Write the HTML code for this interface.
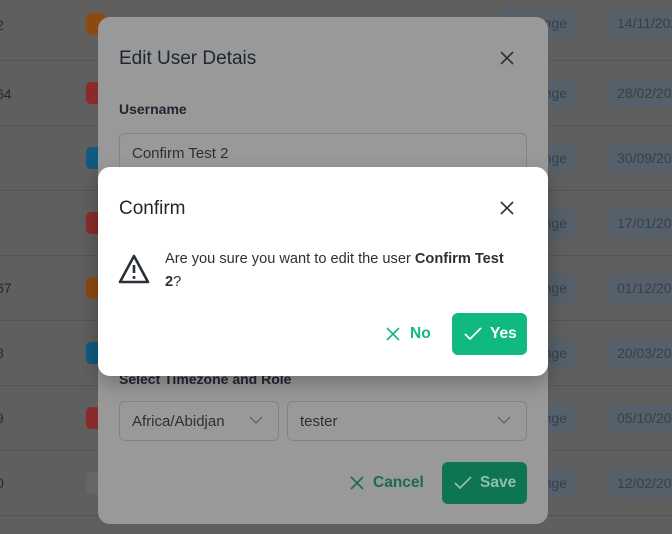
<!DOCTYPE html>
<html><head><style>
*{box-sizing:border-box;margin:0;padding:0}
body{width:672px;height:534px;overflow:hidden;background:#5f5f5f;font-family:"Liberation Sans",sans-serif;position:relative;color:#1f2937}
.row{position:absolute;left:0;width:672px;height:65px;border-bottom:1px solid #555}
.num{position:absolute;left:-4px;font-size:14px;color:#2a2a2a}
.b{position:absolute;left:86px;width:20px;height:22px;border-radius:5px}
.nge{position:absolute;left:500px;width:75px;height:29px;border-radius:6px;background:#56606a;color:#34404c;font-size:14px;text-align:right;padding:6px 8px 0 0}
.dt{position:absolute;left:608px;width:80px;height:29px;border-radius:6px;background:#56606a;color:#34404c;font-size:14px;padding:6px 0 0 9px}
.modal{position:absolute;left:98px;width:450px;border-radius:12px}
.x{position:absolute;width:14px;height:14px}
.inp{position:absolute;border:1px solid #808488;border-radius:6px;font-size:15px;color:#2c3036;padding:11px 12px}
</style></head><body>
<div class="row" style="top:-4px"><span class="num" style="top:21px">2</span><div class="b" style="top:17px;background:#8a4a10"></div><div class="nge" style="top:13px">nge</div><div class="dt" style="top:13px">14/11/2023</div></div>
<div class="row" style="top:61px"><span class="num" style="top:25px">64</span><div class="b" style="top:21px;background:#8a2a2a"></div><div class="nge" style="top:18px">nge</div><div class="dt" style="top:18px">28/02/2023</div></div>
<div class="row" style="top:126px"><div class="b" style="top:21px;background:#0e5a80"></div><div class="nge" style="top:18px">nge</div><div class="dt" style="top:18px">30/09/2023</div></div>
<div class="row" style="top:191px"><div class="b" style="top:21px;background:#8a2a2a"></div><div class="nge" style="top:18px">nge</div><div class="dt" style="top:18px">17/01/2023</div></div>
<div class="row" style="top:256px"><span class="num" style="top:24px">67</span><div class="b" style="top:21px;background:#8a4a10"></div><div class="nge" style="top:18px">nge</div><div class="dt" style="top:18px">01/12/2023</div></div>
<div class="row" style="top:321px"><span class="num" style="top:24px">8</span><div class="b" style="top:21px;background:#0e5a80"></div><div class="nge" style="top:18px">nge</div><div class="dt" style="top:18px">20/03/2023</div></div>
<div class="row" style="top:386px"><span class="num" style="top:24px">9</span><div class="b" style="top:21px;background:#8a2a2a"></div><div class="nge" style="top:18px">nge</div><div class="dt" style="top:18px">05/10/2023</div></div>
<div class="row" style="top:451px"><span class="num" style="top:24px">0</span><div class="b" style="top:21px;background:#666"></div><div class="nge" style="top:18px">nge</div><div class="dt" style="top:18px">12/02/2023</div></div>

<div class="modal" style="top:17px;height:507px;background:#999">
  <div style="position:absolute;left:21px;top:31px;font-size:19px;color:#1e2630">Edit User Detais</div>
  <svg class="x" style="left:402px;top:34px" viewBox="0 0 14 14"><path d="M1 1L13 13M13 1L1 13" stroke="#2a3038" stroke-width="1.6"/></svg>
  <div style="position:absolute;left:21px;top:84px;font-size:14px;font-weight:bold;color:#1e2630">Username</div>
  <div class="inp" style="left:21px;top:116px;width:408px;height:42px">Confirm Test 2</div>
  <div style="position:absolute;left:21px;top:354px;font-size:14px;font-weight:bold;color:#1e2630">Select Timezone and Role</div>
  <div class="inp" style="left:21px;top:384px;width:160px;height:40px">Africa/Abidjan</div>
  <svg style="position:absolute;left:151px;top:399px" width="14" height="9" viewBox="0 0 14 9"><path d="M1 1L7 7L13 1" stroke="#666" stroke-width="1.5" fill="none"/></svg>
  <div class="inp" style="left:189px;top:384px;width:240px;height:40px">tester</div>
  <svg style="position:absolute;left:399px;top:399px" width="14" height="9" viewBox="0 0 14 9"><path d="M1 1L7 7L13 1" stroke="#666" stroke-width="1.5" fill="none"/></svg>
  <svg style="position:absolute;left:252px;top:459px" width="14" height="14" viewBox="0 0 14 14"><path d="M1 1L13 13M13 1L1 13" stroke="#1d6a4c" stroke-width="1.6"/></svg>
  <div style="position:absolute;left:275px;top:457px;font-size:15.5px;font-weight:bold;color:#1d6a4c">Cancel</div>
  <div style="position:absolute;left:344px;top:445px;width:85px;height:42px;border-radius:6px;background:#0e7452"></div>
  <svg style="position:absolute;left:356px;top:459px" width="18" height="14" viewBox="0 0 18 14"><path d="M1 7L6 12L17 1" stroke="#8fc0aa" stroke-width="1.8" fill="none"/></svg>
  <div style="position:absolute;left:382px;top:457px;font-size:15.5px;font-weight:bold;color:#8fc0aa">Save</div>
</div>

<div class="modal" style="top:167px;height:209px;background:#fff;box-shadow:0 8px 20px rgba(0,0,0,.25)">
  <div style="position:absolute;left:21px;top:31px;font-size:19px;color:#1e2630">Confirm</div>
  <svg class="x" style="left:402px;top:34px" viewBox="0 0 14 14"><path d="M1 1L13 13M13 1L1 13" stroke="#2a3038" stroke-width="1.6"/></svg>
  <svg style="position:absolute;left:20px;top:87px" width="32" height="30" viewBox="0 0 32 30"><path d="M16 2L30 28H2Z" stroke="#2a3038" stroke-width="2.6" fill="none" stroke-linejoin="round"/><path d="M16 11V19" stroke="#2a3038" stroke-width="2.6"/><circle cx="16" cy="23.5" r="1.5" fill="#2a3038"/></svg>
  <div style="position:absolute;left:67px;top:81px;width:352px;font-size:14.6px;line-height:23px;color:#2c3036">Are you sure you want to edit the user <b>Confirm Test 2</b>?</div>
  <svg style="position:absolute;left:288px;top:160px" width="14" height="14" viewBox="0 0 14 14"><path d="M1 1L13 13M13 1L1 13" stroke="#10b981" stroke-width="1.6"/></svg>
  <div style="position:absolute;left:312px;top:158px;font-size:15.5px;font-weight:bold;color:#10b981">No</div>
  <div style="position:absolute;left:354px;top:146px;width:75px;height:42px;border-radius:6px;background:#10b981"></div>
  <svg style="position:absolute;left:366px;top:160px" width="18" height="14" viewBox="0 0 18 14"><path d="M1 7L6 12L17 1" stroke="#fff" stroke-width="1.8" fill="none"/></svg>
  <div style="position:absolute;left:392px;top:158px;font-size:15.5px;font-weight:bold;color:#fff">Yes</div>
</div>
</body></html>
